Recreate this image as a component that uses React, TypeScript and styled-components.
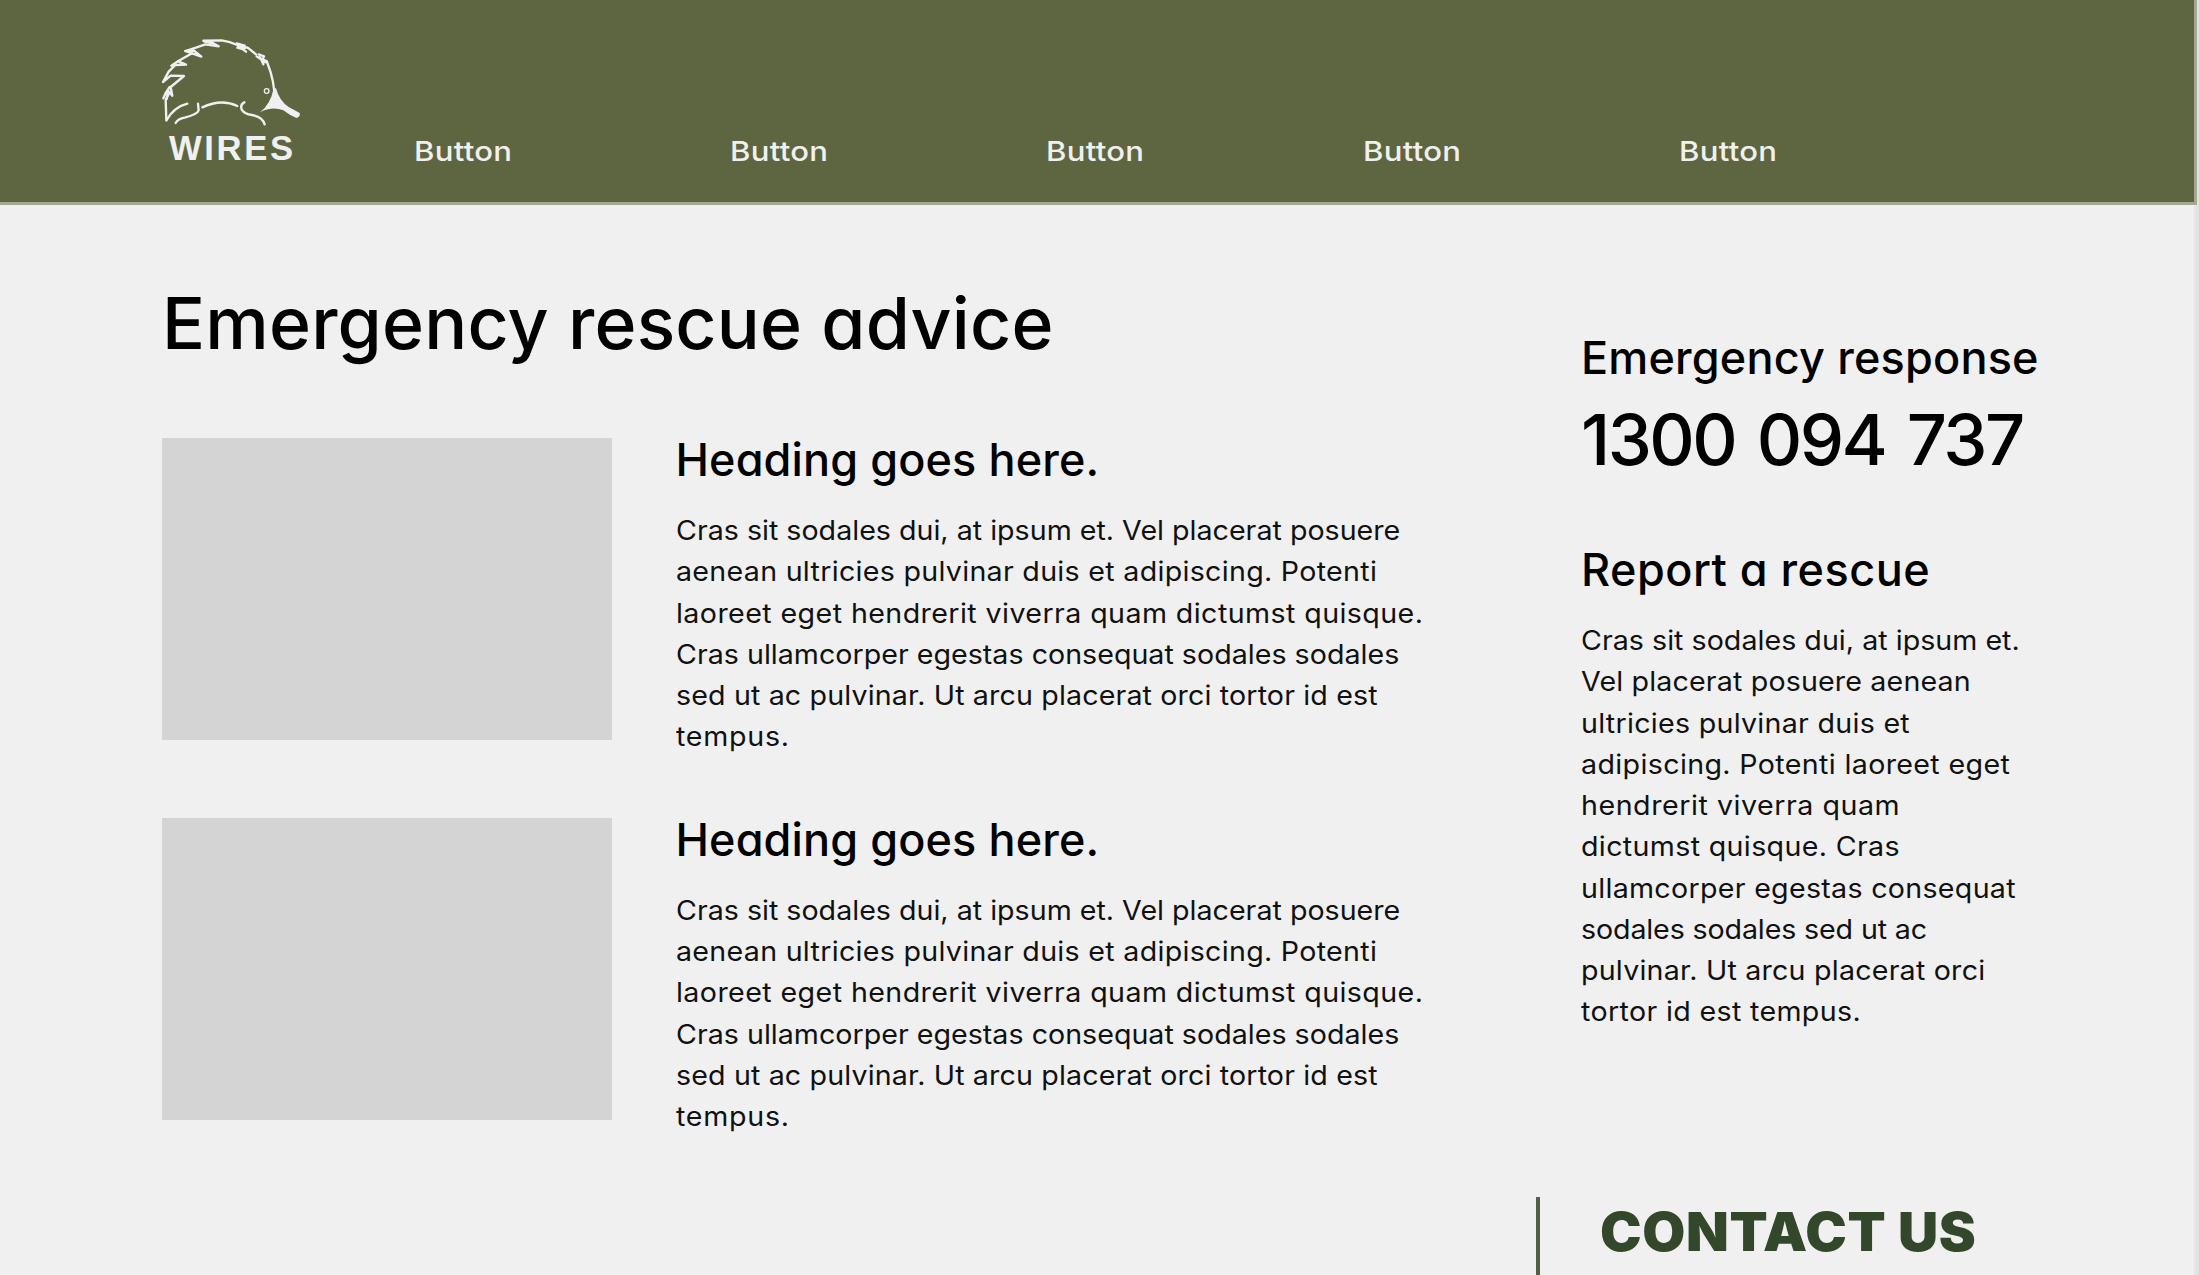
import React from "react";
import styled, { createGlobalStyle } from "styled-components";

const GlobalStyle = createGlobalStyle`
  * { box-sizing: border-box; }
  html, body { margin: 0; padding: 0; }
  body {
    background: #f0f0f0;
    color: #000;
    font-family: Inter, "Open Sans", sans-serif;
    overflow: hidden;
  }
  h1, h2, p { margin: 0; }
`;

const Page = styled.div`
  width: 2199px;
  height: 1275px;
  overflow: hidden;
  display: flex;
  flex-direction: column;
  background: linear-gradient(to right, #f0f0f0 2194px, #e6e6e6 2194px, #e6e6e6 2197px, #e2e2e2 2197px);
`;

const Header = styled.header`
  width: 2197px;
  height: 205px;
  flex: none;
  display: flex;
  align-items: flex-start;
  padding-left: 150px;
  background: #5e6641;
  border-bottom: 3px solid #a5a993;
  border-right: 3px solid #a5a993;
`;

const Logo = styled.svg`
  display: block;
  flex: none;
  width: 170px;
  height: 150px;
  margin-top: 25px;
`;

const LogoText = styled.text`
  font-family: "Liberation Sans", Arial, sans-serif;
  font-weight: 700;
  font-size: 104px;
  fill: #f0f0f0;
`;

const Nav = styled.nav`
  display: grid;
  grid-template-columns: repeat(5, 316.2px);
  margin: 134px 0 0 94px;
`;

const NavLink = styled.a`
  font-size: 27.5px;
  font-weight: 500;
  line-height: 34px;
  letter-spacing: 0.25px;
  transform: scaleX(1.13);
  transform-origin: left;
  color: #f0f0f0;
`;

const Main = styled.main`
  flex: none;
  display: flex;
  padding-left: 162px;
`;

const Content = styled.section`
  width: 1374px;
  flex: none;
  display: flex;
  flex-direction: column;
  padding-top: 73px;
`;

const Title = styled.h1`
  font-size: 71.5px;
  font-weight: 500;
  line-height: 90px;
  letter-spacing: 0.17px;
  font-feature-settings: "cv11";
  margin-bottom: 70px;
`;

const Articles = styled.div`
  display: flex;
  flex-direction: column;
  gap: 60.3px;
`;

const Article = styled.article`
  display: flex;
  align-items: flex-start;
  gap: 64px;
`;

const Thumb = styled.div`
  flex: none;
  width: 449.5px;
  height: 302px;
  background: #d4d4d4;
`;

const Heading = styled.h2<{ $tracking?: number }>`
  font-size: 45px;
  font-weight: 500;
  line-height: 43px;
  letter-spacing: ${(p) => p.$tracking ?? 0.11}px;
  font-feature-settings: "cv11";
  white-space: nowrap;
`;

const Copy = styled.p`
  margin-top: 29px;
  font-size: 27px;
  line-height: 41.25px;
  color: #111;
  transform: scaleX(1.06);
  transform-origin: left;
`;

const Line = styled.span<{ $tracking: number }>`
  display: block;
  white-space: nowrap;
  letter-spacing: ${(p) => p.$tracking}px;
`;

const Aside = styled.aside`
  flex: none;
  display: flex;
  flex-direction: column;
  padding-top: 131px;
`;

const Block = styled.div`
  padding-left: 45px;
`;

const Phone = styled.p`
  margin: 21.3px 0 67.8px;
  font-size: 70.5px;
  font-weight: 500;
  line-height: 80px;
  letter-spacing: -2.6px;
  word-spacing: 5.5px;
  white-space: nowrap;
`;

const Contact = styled.div`
  height: 140px;
  margin-top: 164px;
  padding: 5px 0 0 60px;
  border-left: 4px solid #4d6144;
`;

const ContactTitle = styled.h2`
  font-size: 53px;
  font-weight: 900;
  line-height: 60px;
  letter-spacing: 0.58px;
  transform: scaleX(1.05);
  transform-origin: left;
  color: #33472b;
  white-space: nowrap;
`;

type TextLine = [string, number];

const articleCopy: TextLine[] = [
  ["Cras sit sodales dui, at ipsum et. Vel placerat posuere", 0],
  ["aenean ultricies pulvinar duis et adipiscing. Potenti", 0.27],
  ["laoreet eget hendrerit viverra quam dictumst quisque.", 0.385],
  ["Cras ullamcorper egestas consequat sodales sodales", 0.01],
  ["sed ut ac pulvinar. Ut arcu placerat orci tortor id est", 0.13],
  ["tempus.", 0.7],
];

const reportCopy: TextLine[] = [
  ["Cras sit sodales dui, at ipsum et.", 0.02],
  ["Vel placerat posuere aenean", 0.14],
  ["ultricies pulvinar duis et", 0.26],
  ["adipiscing. Potenti laoreet eget", 0.33],
  ["hendrerit viverra quam", 0.5],
  ["dictumst quisque. Cras", 0.32],
  ["ullamcorper egestas consequat", 0.27],
  ["sodales sodales sed ut ac", -0.13],
  ["pulvinar. Ut arcu placerat orci", 0.2],
  ["tortor id est tempus.", 0.32],
];

function CopyBlock({ lines }: { lines: TextLine[] }) {
  return (
    <Copy>
      {lines.map(([text, tracking]) => (
        <Line key={text} $tracking={tracking}>
          {text}
        </Line>
      ))}
    </Copy>
  );
}

function WiresLogo() {
  return (
    <Logo viewBox="0 0 510 450" role="img" aria-label="WIRES">
      <g fill="none" stroke="#f0f0f0" strokeWidth="7" strokeLinejoin="round" strokeLinecap="round">
        <path d="M49 286 L47 224 L59 202 L67 212 L62 186 L102 153 L62 152 L39 171 L56 140 L76 120 L108 119 L84 109 L126 85 L154 95 L132 77 L106 78 L138 68 L166 58 L206 64 L188 54 L160 47 L215 46 Q240 49 262 60" />
        <path d="M40 220 L48 202 L59 186 M50 222 L56 190 M64 122 L84 109 M106 78 L128 86 M162 49 L190 56" />
        <path d="M49 286 Q72 246 112 236" />
        <path d="M77 294 Q84 281 104 278 Q143 268 146 256 L144 236" />
        <path d="M157 247 Q214 220 262 243" />
        <path d="M283 232 Q270 238 275 254 Q284 268 306 270 Q338 276 344 298" />
        <path d="M260 55 L284 62 L278 70 L292 67 L318 88 M262 68 L278 72 L288 80 M264 62 L286 68" />
        <path d="M326 88 L342 94 L338 104 L350 108 L362 142 Q370 168 373 200 M320 94 L334 104 L340 118 M328 96 L346 112" />
        <circle cx="350" cy="198" r="7" strokeWidth="4" />
      </g>
      <path
        fill="#f0f0f0"
        d="M371 190 L378 190 Q388 228 416 246 L449 264 Q452 274 440 279 Q420 272 400 256 Q366 243 330 262 Q362 238 371 190 Z"
      />
      <LogoText x="57" y="406" textLength="372" lengthAdjust="spacing">
        WIRES
      </LogoText>
    </Logo>
  );
}

export default function App() {
  return (
    <>
      <GlobalStyle />
      <Page>
        <Header>
          <WiresLogo />
          <Nav>
            {[1, 2, 3, 4, 5].map((n) => (
              <NavLink key={n}>Button</NavLink>
            ))}
          </Nav>
        </Header>
        <Main>
          <Content>
            <Title>Emergency rescue advice</Title>
            <Articles>
              {[1, 2].map((n) => (
                <Article key={n}>
                  <Thumb />
                  <div>
                    <Heading>Heading goes here.</Heading>
                    <CopyBlock lines={articleCopy} />
                  </div>
                </Article>
              ))}
            </Articles>
          </Content>
          <Aside>
            <Block>
              <Heading $tracking={0.18}>Emergency response</Heading>
              <Phone>1300 094 737</Phone>
              <Heading $tracking={0.48}>Report a rescue</Heading>
              <CopyBlock lines={reportCopy} />
            </Block>
            <Contact>
              <ContactTitle>CONTACT US</ContactTitle>
            </Contact>
          </Aside>
        </Main>
      </Page>
    </>
  );
}
